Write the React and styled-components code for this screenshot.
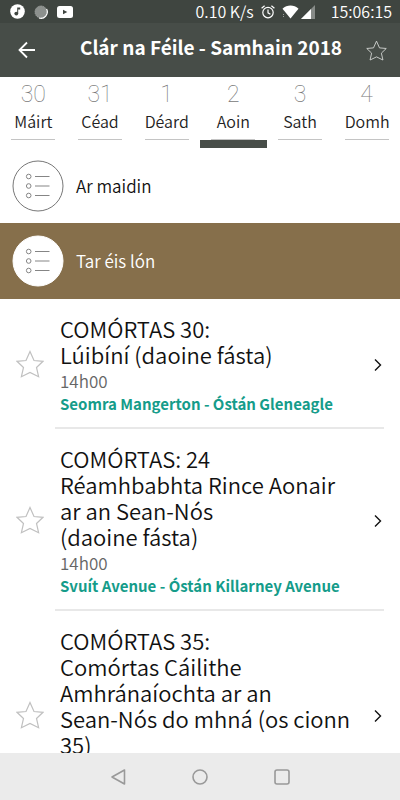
import React, { useState } from 'react';
import styled, { createGlobalStyle } from 'styled-components';

const GlobalStyle = createGlobalStyle`
  * {
    box-sizing: border-box;
  }

  body {
    margin: 0;
    background: #fff;
    color: #111;
    font-family: 'Noto Sans CJK JP', 'Noto Sans', sans-serif;
    font-weight: 350;
  }

  button {
    margin: 0;
    padding: 0;
    border: 0;
    background: none;
    color: inherit;
    font: inherit;
    cursor: pointer;
  }

  h1, h2, p, ul {
    margin: 0;
    padding: 0;
    font-weight: inherit;
  }

  svg {
    display: block;
    flex: none;
  }
`;

const Screen = styled.div`
  display: flex;
  flex-direction: column;
  height: 100vh;
  overflow: hidden;
`;

const StatusBar = styled.div`
  display: flex;
  align-items: center;
  justify-content: space-between;
  height: 23px;
  padding: 0 8px 0 10px;
  background: #3f4540;
  color: #fff;
  font-size: 16px;
  line-height: 23px;
`;

const StatusGroup = styled.div`
  display: flex;
  align-items: center;
  gap: ${p => p.$gap}px;
`;

const Clock = styled.span`
  margin-left: 14px;
`;

const Header = styled.header`
  display: flex;
  align-items: center;
  height: 54px;
  padding: 0 13px 0 18px;
  background: #474d48;
  color: #fff;
`;

const Title = styled.h1`
  flex: 1;
  padding: 0 0 6px 20px;
  text-align: center;
  font-size: 19px;
  font-weight: 700;
  line-height: 26px;
  white-space: nowrap;
`;

const Tabs = styled.nav`
  display: grid;
  grid-template-columns: repeat(6, 1fr);
  height: 71px;
`;

const Tab = styled.button`
  display: flex;
  flex-direction: column;
  align-items: center;
  border-bottom: 8px solid ${p => (p.$active ? '#474d48' : 'transparent')};
`;

const DayNumber = styled.span`
  height: 32px;
  color: #777;
  font-family: Roboto, sans-serif;
  font-size: 23px;
  font-weight: 100;
  line-height: 36px;
`;

const DayName = styled.span`
  width: 44px;
  height: 31px;
  border-bottom: 1px solid #c4c4c4;
  color: #222;
  font-size: 16px;
  line-height: 24px;
`;

const Session = styled.button`
  display: flex;
  flex: none;
  align-items: center;
  gap: 12px;
  height: ${p => (p.$active ? 76 : 75)}px;
  padding: 0 12px;
  background: ${p => (p.$active ? '#866f4b' : '#fff')};
  color: ${p => (p.$active ? '#fff' : '#111')};
  font-size: 17px;
  line-height: 26px;
`;

const EventList = styled.ul`
  flex: 1;
  min-height: 0;
  overflow: hidden;
  list-style: none;
`;

const EventItem = styled.li`
  display: flex;
  align-items: center;
  padding-right: 16px;
`;

const StarButton = styled.button`
  flex: none;
  width: 55px;
  padding: 0 0 0 16px;
`;

const EventLink = styled.a`
  display: flex;
  flex: 1;
  align-items: center;
  min-width: 0;
  padding: 16px 0 12px 5px;
  border-bottom: 2px solid #e8e8e8;
  color: inherit;
  text-decoration: none;
`;

const EventBody = styled.div`
  flex: 1;
`;

const EventTitle = styled.h2`
  margin-bottom: 3px;
  font-size: 22px;
  line-height: 26px;
  white-space: pre-line;
`;

const EventTime = styled.p`
  color: #666;
  font-size: 17px;
  line-height: 22px;
`;

const EventVenue = styled.p`
  color: #159c8a;
  font-size: 15px;
  font-weight: 700;
  line-height: 23px;
`;

const NavBar = styled.div`
  display: flex;
  flex: none;
  align-items: center;
  justify-content: center;
  gap: 64px;
  height: 47px;
  background: #ebebeb;
`;

const Star = ({ size, color }) => (
  <svg width={size} height={size} viewBox="0 0 28 28" fill="none" stroke={color} strokeWidth="1.2">
    <path d="M14 1.5L18 10.5L27 11.3L20.5 17.5L22.6 26.7L14 22.5L5.4 26.7L7.5 17.5L1 11.3L10 10.5Z" />
  </svg>
);

const ListIcon = ({ active }) => (
  <svg width="52" height="52" viewBox="0 0 52 52" fill="none" stroke="#858585">
    <circle cx="26" cy="26" r="25" fill="#fff" stroke={active ? '#fff' : '#777'} />
    {[16.5, 26, 35.5].map(y => (
      <g key={y}>
        <circle cx="16.7" cy={y} r="2.3" />
        <path d={`M23 ${y}h14.5`} />
      </g>
    ))}
  </svg>
);

const MusicIcon = () => (
  <svg width="15" height="15" viewBox="0 0 15 15">
    <circle cx="7.5" cy="7.5" r="7.3" fill="#fff" />
    <circle cx="6.3" cy="9.6" r="1.9" fill="#3f4540" />
    <path d="M7.2 9.6V3.5h3v1.9H8.2v4.2z" fill="#3f4540" />
  </svg>
);

const SyncIcon = () => (
  <svg width="14" height="14" viewBox="0 0 14 14">
    <circle cx="7" cy="7" r="6" fill="#8c908d" stroke="#aeb1af" strokeDasharray="1 1" />
    <path d="M12.6 4A6.4 6.4 0 0 1 5 13" fill="none" stroke="#fff" strokeWidth="1.2" />
  </svg>
);

const VideoIcon = () => (
  <svg width="16" height="12" viewBox="0 0 16 12">
    <rect width="16" height="12" rx="2.5" fill="#fff" />
    <path d="M6 3.7v4.6L10.3 6z" fill="#3f4540" />
  </svg>
);

const AlarmIcon = () => (
  <svg width="14" height="14" viewBox="0 0 14 14" fill="none" stroke="#fff" strokeWidth="1.2">
    <circle cx="7" cy="7.6" r="5.2" />
    <path d="M7 4.5v3.3l2.4 1.4M.6 3.3L3.6.8M13.4 3.3L10.4.8" />
  </svg>
);

const WifiIcon = () => (
  <svg width="17" height="14" viewBox="0 0 17 14">
    <path d="M.5 3.7C5-.5 12-.5 16.5 3.7L8.5 13.5z" fill="#fff" />
    <path d="M1.5 9v4" stroke="#9a9e9b" strokeDasharray="1 1" />
  </svg>
);

const SignalIcon = () => (
  <svg width="14" height="14" viewBox="0 0 14 14">
    <path d="M0 14L14 0v14z" fill="#878b88" />
    <path d="M0 14L10 4v10z" fill="#fff" />
  </svg>
);

const days = [
  { number: 30, name: 'Máirt' },
  { number: 31, name: 'Céad' },
  { number: 1, name: 'Déard' },
  { number: 2, name: 'Aoin' },
  { number: 3, name: 'Sath' },
  { number: 4, name: 'Domh' },
];

const sessions = ['Ar maidin', 'Tar éis lón'];

const events = [
  {
    id: 30,
    title: 'COMÓRTAS 30:\nLúibíní (daoine fásta)',
    time: '14h00',
    venue: 'Seomra Mangerton - Óstán Gleneagle',
  },
  {
    id: 24,
    title: 'COMÓRTAS: 24\nRéamhbabhta Rince Aonair\nar an Sean-Nós\n(daoine fásta)',
    time: '14h00',
    venue: 'Svuít Avenue - Óstán Killarney Avenue',
  },
  {
    id: 35,
    title: 'COMÓRTAS 35:\nComórtas Cáilithe\nAmhránaíochta ar an\nSean-Nós do mhná (os cionn\n35)',
    time: '14h00',
    venue: 'Óstán Gleneagle',
  },
];

const App = () => {
  const [day, setDay] = useState(2);
  const [session, setSession] = useState('Tar éis lón');

  return (
    <>
      <GlobalStyle />
      <Screen>
        <StatusBar>
          <StatusGroup $gap={9}>
            <MusicIcon />
            <SyncIcon />
            <VideoIcon />
          </StatusGroup>
          <StatusGroup $gap={2}>
            <StatusGroup $gap={7}>
              <span>0.10 K/s</span>
              <AlarmIcon />
              <WifiIcon />
            </StatusGroup>
            <SignalIcon />
            <Clock>15:06:15</Clock>
          </StatusGroup>
        </StatusBar>
        <Header>
          <button aria-label="Siar">
            <svg width="18" height="18" viewBox="0 0 18 18" fill="none" stroke="#fff" strokeWidth="1.8">
              <path d="M17 9H2.5M9 1.5L1.5 9L9 16.5" />
            </svg>
          </button>
          <Title>Clár na Féile - Samhain 2018</Title>
          <button aria-label="Ceanáin">
            <Star size={21} color="#d4d6d4" />
          </button>
        </Header>
        <Tabs>
          {days.map(d => (
            <Tab key={d.number} $active={d.number === day} onClick={() => setDay(d.number)}>
              <DayNumber>{d.number}</DayNumber>
              <DayName>{d.name}</DayName>
            </Tab>
          ))}
        </Tabs>
        {sessions.map(s => (
          <Session key={s} $active={s === session} onClick={() => setSession(s)}>
            <ListIcon active={s === session} />
            {s}
          </Session>
        ))}
        <EventList>
          {events.map(e => (
            <EventItem key={e.id}>
              <StarButton aria-label="Cuir le ceanáin">
                <Star size={28} color="#c0c0c0" />
              </StarButton>
              <EventLink href="#">
                <EventBody>
                  <EventTitle>{e.title}</EventTitle>
                  <EventTime>{e.time}</EventTime>
                  <EventVenue>{e.venue}</EventVenue>
                </EventBody>
                <svg width="10" height="14" viewBox="0 0 10 14" fill="none" stroke="#111" strokeWidth="1.4">
                  <path d="M1 1.5L6.5 7L1 12.5" />
                </svg>
              </EventLink>
            </EventItem>
          ))}
        </EventList>
        <NavBar>
          <button aria-label="Siar">
            <svg width="18" height="18" viewBox="0 0 18 18" fill="none" stroke="#999" strokeWidth="1.6" strokeLinejoin="round">
              <path d="M15.5 2v14L3 9z" />
            </svg>
          </button>
          <button aria-label="Baile">
            <svg width="18" height="18" viewBox="0 0 18 18" fill="none" stroke="#999" strokeWidth="1.6">
              <circle cx="9" cy="9" r="7" />
            </svg>
          </button>
          <button aria-label="Aipeanna">
            <svg width="18" height="18" viewBox="0 0 18 18" fill="none" stroke="#999" strokeWidth="1.6">
              <rect x="2" y="2" width="14" height="14" rx="2" />
            </svg>
          </button>
        </NavBar>
      </Screen>
    </>
  );
};

export default App;
